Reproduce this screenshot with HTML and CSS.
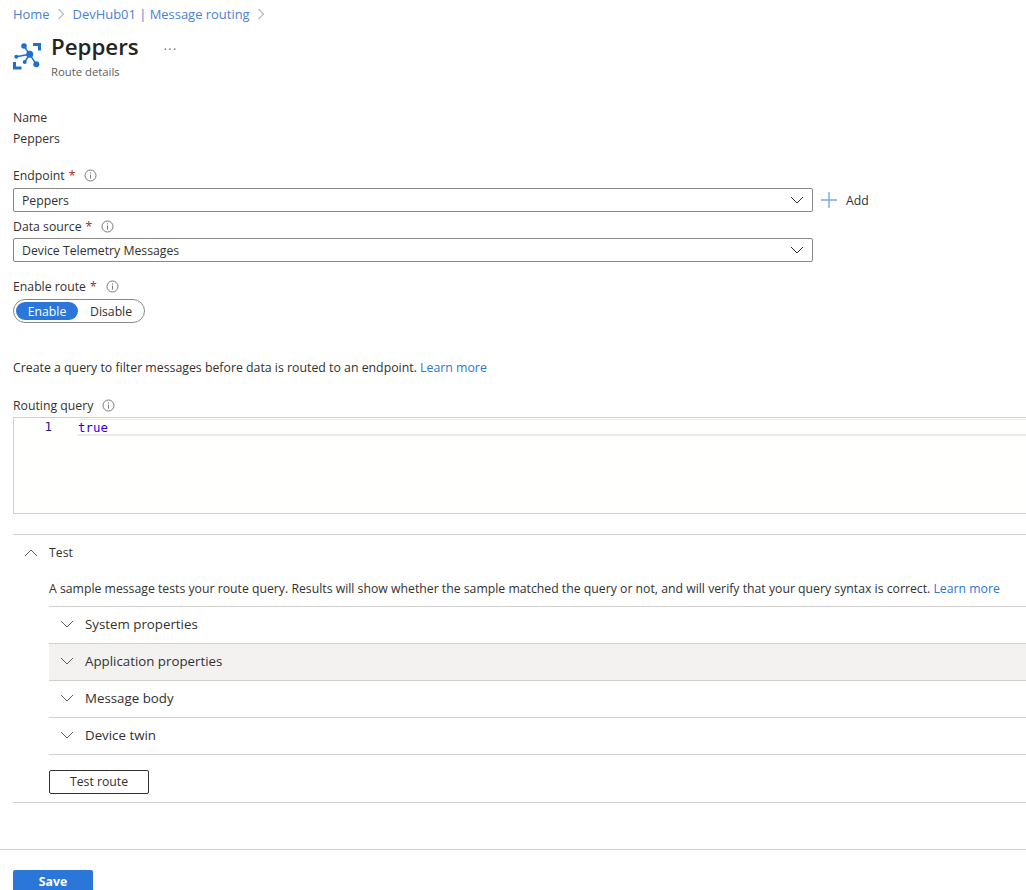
FILE: index.html
```html
<!DOCTYPE html>
<html lang="en">
<head>
    <meta charset="UTF-8">
    <title>Peppers - Route details</title>
    <link rel="stylesheet" href="styles.css">
</head>
<body>
    <div class="content">
        <nav class="crumbs">
            <a href="#">Home</a>
            <svg class="crumb-sep" width="8" height="12" viewBox="0 0 8 12"><path d="M1.5 1l5 5-5 5" fill="none" stroke="#8a8886"/></svg>
            <a href="#">DevHub01 | Message routing</a>
            <svg class="crumb-sep" width="8" height="12" viewBox="0 0 8 12"><path d="M1.5 1l5 5-5 5" fill="none" stroke="#8a8886"/></svg>
        </nav>

        <header class="page-head">
            <!-- Route icon -->
            <svg class="route-icon" width="28" height="28" viewBox="0 0 28 28">
                <path d="M20 1h8v7.500h-3V4h-5zM0 20h3v4.500h5.500v3H0z" fill="#1f6fd0"/>
                <path d="M3.300 14.700L16.700 12.300M11 4L16.700 12.300M16.700 12.300L11.700 20M16.700 12.300L23.300 22.300" stroke="#1f6fd0" stroke-width="1.500" fill="none"/>
                <circle cx="3.300" cy="14.700" r="2" fill="#1f6fd0"/>
                <circle cx="11" cy="4" r="2.800" fill="#1f6fd0"/>
                <circle cx="16.700" cy="12.300" r="3.500" fill="#1f6fd0"/>
                <circle cx="11.700" cy="20" r="2" fill="#1f6fd0"/>
                <circle cx="23.300" cy="22.300" r="3" fill="#1f6fd0"/>
            </svg>
            <div class="head-text">
                <h1>Peppers</h1>
                <div class="subtitle">Route details</div>
            </div>
            <span class="more">···</span>
        </header>

        <div class="name-block">
            <div class="name-label">Name</div>
            <div class="name-value">Peppers</div>
        </div>

        <div class="label endpoint-label">Endpoint <span class="req">*</span>
            <svg class="info" width="13" height="13" viewBox="0 0 13 13"><circle cx="6.500" cy="6.500" r="5.500" fill="none" stroke="#7a7876"/><path d="M6.500 5.600v4M6.500 3.400v1.100" stroke="#7a7876"/></svg>
        </div>
        <div class="select-row">
            <div class="select">
                <span>Peppers</span>
                <svg width="14" height="8" viewBox="0 0 14 8"><path d="M1 1l6 6 6-6" fill="none" stroke="#323130"/></svg>
            </div>
            <div class="add">
                <svg width="16" height="16" viewBox="0 0 16 16"><path d="M8 0v16M0 8h16" stroke="#75a9e6" stroke-width="1.400"/></svg>
                <span>Add</span>
            </div>
        </div>

        <div class="label source-label">Data source <span class="req">*</span>
            <svg class="info" width="13" height="13" viewBox="0 0 13 13"><circle cx="6.500" cy="6.500" r="5.500" fill="none" stroke="#7a7876"/><path d="M6.500 5.600v4M6.500 3.400v1.100" stroke="#7a7876"/></svg>
        </div>
        <div class="select">
            <span>Device Telemetry Messages</span>
            <svg width="14" height="8" viewBox="0 0 14 8"><path d="M1 1l6 6 6-6" fill="none" stroke="#323130"/></svg>
        </div>

        <div class="label enable-label">Enable route <span class="req">*</span>
            <svg class="info" width="13" height="13" viewBox="0 0 13 13"><circle cx="6.500" cy="6.500" r="5.500" fill="none" stroke="#7a7876"/><path d="M6.500 5.600v4M6.500 3.400v1.100" stroke="#7a7876"/></svg>
        </div>
        <div class="toggle">
            <span class="toggle-on">Enable</span>
            <span class="toggle-off">Disable</span>
        </div>

        <p class="hint">Create a query to filter messages before data is routed to an endpoint. <a href="#">Learn more</a></p>

        <div class="label query-label">Routing query
            <svg class="info" width="13" height="13" viewBox="0 0 13 13"><circle cx="6.500" cy="6.500" r="5.500" fill="none" stroke="#7a7876"/><path d="M6.500 5.600v4M6.500 3.400v1.100" stroke="#7a7876"/></svg>
        </div>
        <div class="editor">
            <div class="gutter">1</div>
            <div class="code-line">true</div>
        </div>

        <section class="test">
            <div class="test-head">
                <svg width="14" height="8" viewBox="0 0 14 8"><path d="M1 7l6-6 6 6" fill="none" stroke="#605e5c"/></svg>
                <span>Test</span>
            </div>
            <div class="test-body">
                <p class="test-desc">A sample message tests your route query. Results will show whether the sample matched the query or not, and will verify that your query syntax is correct. <a href="#">Learn more</a></p>
                <div class="acc-row">
                    <svg width="14" height="8" viewBox="0 0 14 8"><path d="M1 1l6 6 6-6" fill="none" stroke="#605e5c"/></svg>
                    <span>System properties</span>
                </div>
                <div class="acc-row acc-hover">
                    <svg width="14" height="8" viewBox="0 0 14 8"><path d="M1 1l6 6 6-6" fill="none" stroke="#605e5c"/></svg>
                    <span>Application properties</span>
                </div>
                <div class="acc-row">
                    <svg width="14" height="8" viewBox="0 0 14 8"><path d="M1 1l6 6 6-6" fill="none" stroke="#605e5c"/></svg>
                    <span>Message body</span>
                </div>
                <div class="acc-row">
                    <svg width="14" height="8" viewBox="0 0 14 8"><path d="M1 1l6 6 6-6" fill="none" stroke="#605e5c"/></svg>
                    <span>Device twin</span>
                </div>
                <button class="test-btn">Test route</button>
            </div>
        </section>
    </div>

    <footer class="footer">
        <button class="save-btn">Save</button>
    </footer>
</body>
</html>
```

FILE: styles.css
```css
html, body {
    height: 890px;
    overflow: hidden;
}
body {
    margin: 0;
    font-family: "Open Sans", "Noto Sans", sans-serif;
    font-size: 12.25px;
    color: #323130;
    background-color: #fff;
}
a {
    color: #2b77d4;
    text-decoration: none;
}
p {
    margin: 0;
}
.content {
    padding-left: 13px;
}
.crumbs {
    display: flex;
    align-items: center;
    gap: 7.5px;
    height: 18px;
    padding-top: 5px;
}
.crumbs a {
    font-size: 12.95px;
    color: #4a7fd8;
}
.page-head {
    display: flex;
    align-items: flex-start;
    height: 57px;
    margin-top: 8px;
}
.route-icon {
    margin-top: 11px;
    margin-right: 10px;
}
h1 {
    margin: 0;
    font-size: 22.3px;
    font-weight: 600;
    line-height: 32px;
    color: #252423;
}
.subtitle {
    margin-top: 1px;
    font-size: 11.3px;
    line-height: 16px;
    color: #605e5c;
}
.more {
    margin-left: 25px;
    margin-top: 10px;
    font-size: 12px;
    letter-spacing: 1.5px;
    color: #605e5c;
}
.name-block {
    margin-top: 19px;
    line-height: 21px;
}
.label {
    display: flex;
    align-items: center;
    gap: 4px;
    height: 18px;
}
.req {
    color: #a4262c;
}
.info {
    margin-left: 5px;
}
.endpoint-label {
    margin-top: 17px;
    margin-bottom: 4px;
}
.source-label {
    margin-top: 5px;
    margin-bottom: 3px;
}
.select-row {
    display: flex;
    align-items: center;
}
.select {
    display: flex;
    align-items: center;
    justify-content: space-between;
    box-sizing: border-box;
    width: 800px;
    height: 24px;
    padding: 0 8px;
    border: 1px solid #8a8886;
    border-radius: 2px;
}
.add {
    display: flex;
    align-items: center;
    gap: 9px;
    margin-left: 8px;
}
.enable-label {
    margin-top: 15px;
    margin-bottom: 4px;
}
.toggle {
    display: inline-flex;
    align-items: center;
    box-sizing: border-box;
    width: 132px;
    height: 24px;
    padding: 0 2px;
    border: 1px solid #8a8886;
    border-radius: 12px;
}
.toggle-on {
    width: 62px;
    height: 18px;
    line-height: 20px;
    text-align: center;
    color: #fff;
    background-color: #2b77d9;
    border-radius: 9px;
}
.toggle-off {
    margin-left: 12px;
}
.hint {
    margin-top: 36px;
    font-size: 12.32px;
    line-height: 18px;
}
.query-label {
    margin-top: 19px;
    margin-bottom: 3px;
}
.editor {
    display: flex;
    box-sizing: border-box;
    height: 97px;
    padding-top: 1px;
    background-color: #fffffd;
    border: 1px solid #d2d0ce;
    border-right: 0;
    font-family: "DejaVu Sans Mono", "Liberation Mono", monospace;
    font-size: 12.4px;
}
.gutter {
    width: 38px;
    line-height: 16px;
    text-align: right;
    color: #1f1b8f;
}
.code-line {
    flex: 1;
    height: 14px;
    margin-left: 26px;
    line-height: 15px;
    color: #2b00e8;
    border-top: 1px solid #eceaea;
    border-bottom: 2px solid #eceaea;
}
.test {
    margin-top: 20px;
    border-top: 1px solid #d2d0ce;
    border-bottom: 1px solid #d2d0ce;
}
.test-head {
    display: flex;
    align-items: center;
    gap: 11px;
    height: 35px;
    padding-left: 11px;
}
.test-body {
    padding-left: 36px;
    padding-bottom: 8px;
}
.test-desc {
    height: 36px;
    line-height: 38px;
    white-space: nowrap;
}
.acc-row {
    display: flex;
    align-items: center;
    gap: 11px;
    box-sizing: content-box;
    height: 34px;
    padding: 0 0 2px 11px;
    font-size: 13.3px;
    border-top: 1px solid #d2d0ce;
}
.acc-hover {
    background-color: #f3f2f1;
}
.acc-row:last-of-type {
    border-bottom: 1px solid #d2d0ce;
}
.test-btn {
    display: block;
    box-sizing: border-box;
    width: 100px;
    height: 24px;
    margin-top: 15px;
    padding: 0 0 2px;
    font: inherit;
    color: #323130;
    background-color: #fff;
    border: 1px solid #323130;
    border-radius: 2px;
}
.footer {
    margin-top: 46px;
    padding: 20px 0 0 13px;
    border-top: 1px solid #d2d0ce;
}
.save-btn {
    display: block;
    box-sizing: border-box;
    width: 80px;
    height: 24px;
    padding: 0 0 2px;
    font: inherit;
    font-weight: 700;
    color: #fff;
    background-color: #2b77d9;
    border: 0;
    border-radius: 2px;
}
```
